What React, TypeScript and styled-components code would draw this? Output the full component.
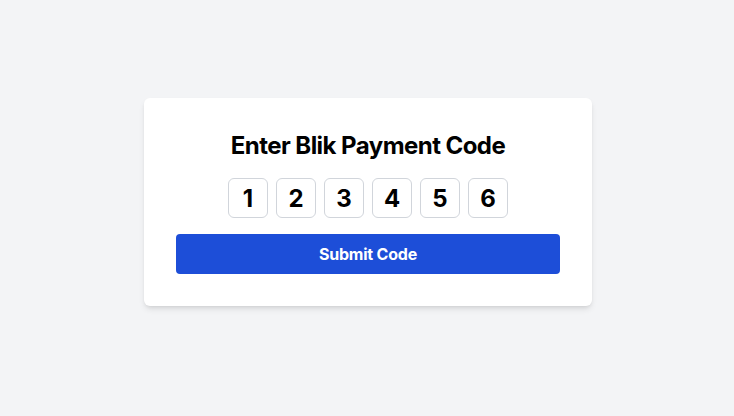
import React from "react";
import styled, { createGlobalStyle } from "styled-components";

const Global = createGlobalStyle`
  html, body { margin: 0; padding: 0; background: #f3f4f6; }
  body { font-family: Inter, "Noto Sans", sans-serif; }
  * { box-sizing: border-box; }
`;

const Page = styled.div`
  height: 416px;
  display: flex;
  align-items: center;
  justify-content: center;
  padding: 0 0 12px 2px;
`;

const Card = styled.div`
  width: 448px;
  background: #fff;
  border-radius: 6px;
  padding: 32px;
  box-shadow: 0 4px 6px -1px rgba(0,0,0,0.1), 0 2px 4px -2px rgba(0,0,0,0.1);
  display: flex;
  flex-direction: column;
  align-items: center;
`;

const Title = styled.h1`
  margin: 0 0 16px;
  font-size: 24px;
  line-height: 32px;
  font-weight: 700;
  letter-spacing: -0.55px;
  color: #000;
`;

const Digits = styled.div`
  display: flex;
  gap: 8px;
  margin-bottom: 16px;
`;

const Digit = styled.input`
  width: 40px;
  height: 40px;
  border: 1px solid #d1d5db;
  border-radius: 6px;
  text-align: center;
  font-family: Inter, "Noto Sans", sans-serif;
  font-size: 24px;
  font-weight: 700;
  color: #000;
  padding: 0;
  background: #fff;
  outline: none;
`;

const Submit = styled.button`
  width: 100%;
  height: 40px;
  border: none;
  border-radius: 4px;
  background: #1d4ed8;
  color: #fff;
  font-family: Inter, "Noto Sans", sans-serif;
  font-size: 16px;
  font-weight: 700;
  letter-spacing: -0.2px;
  cursor: pointer;
`;

export default function App() {
  const digits = ["1", "2", "3", "4", "5", "6"];
  return (
    <>
      <Global />
      <Page>
        <Card>
          <Title>Enter Blik Payment Code</Title>
          <Digits>
            {digits.map((d, i) => (
              <Digit key={i} defaultValue={d} maxLength={1} />
            ))}
          </Digits>
          <Submit>Submit Code</Submit>
        </Card>
      </Page>
    </>
  );
}
